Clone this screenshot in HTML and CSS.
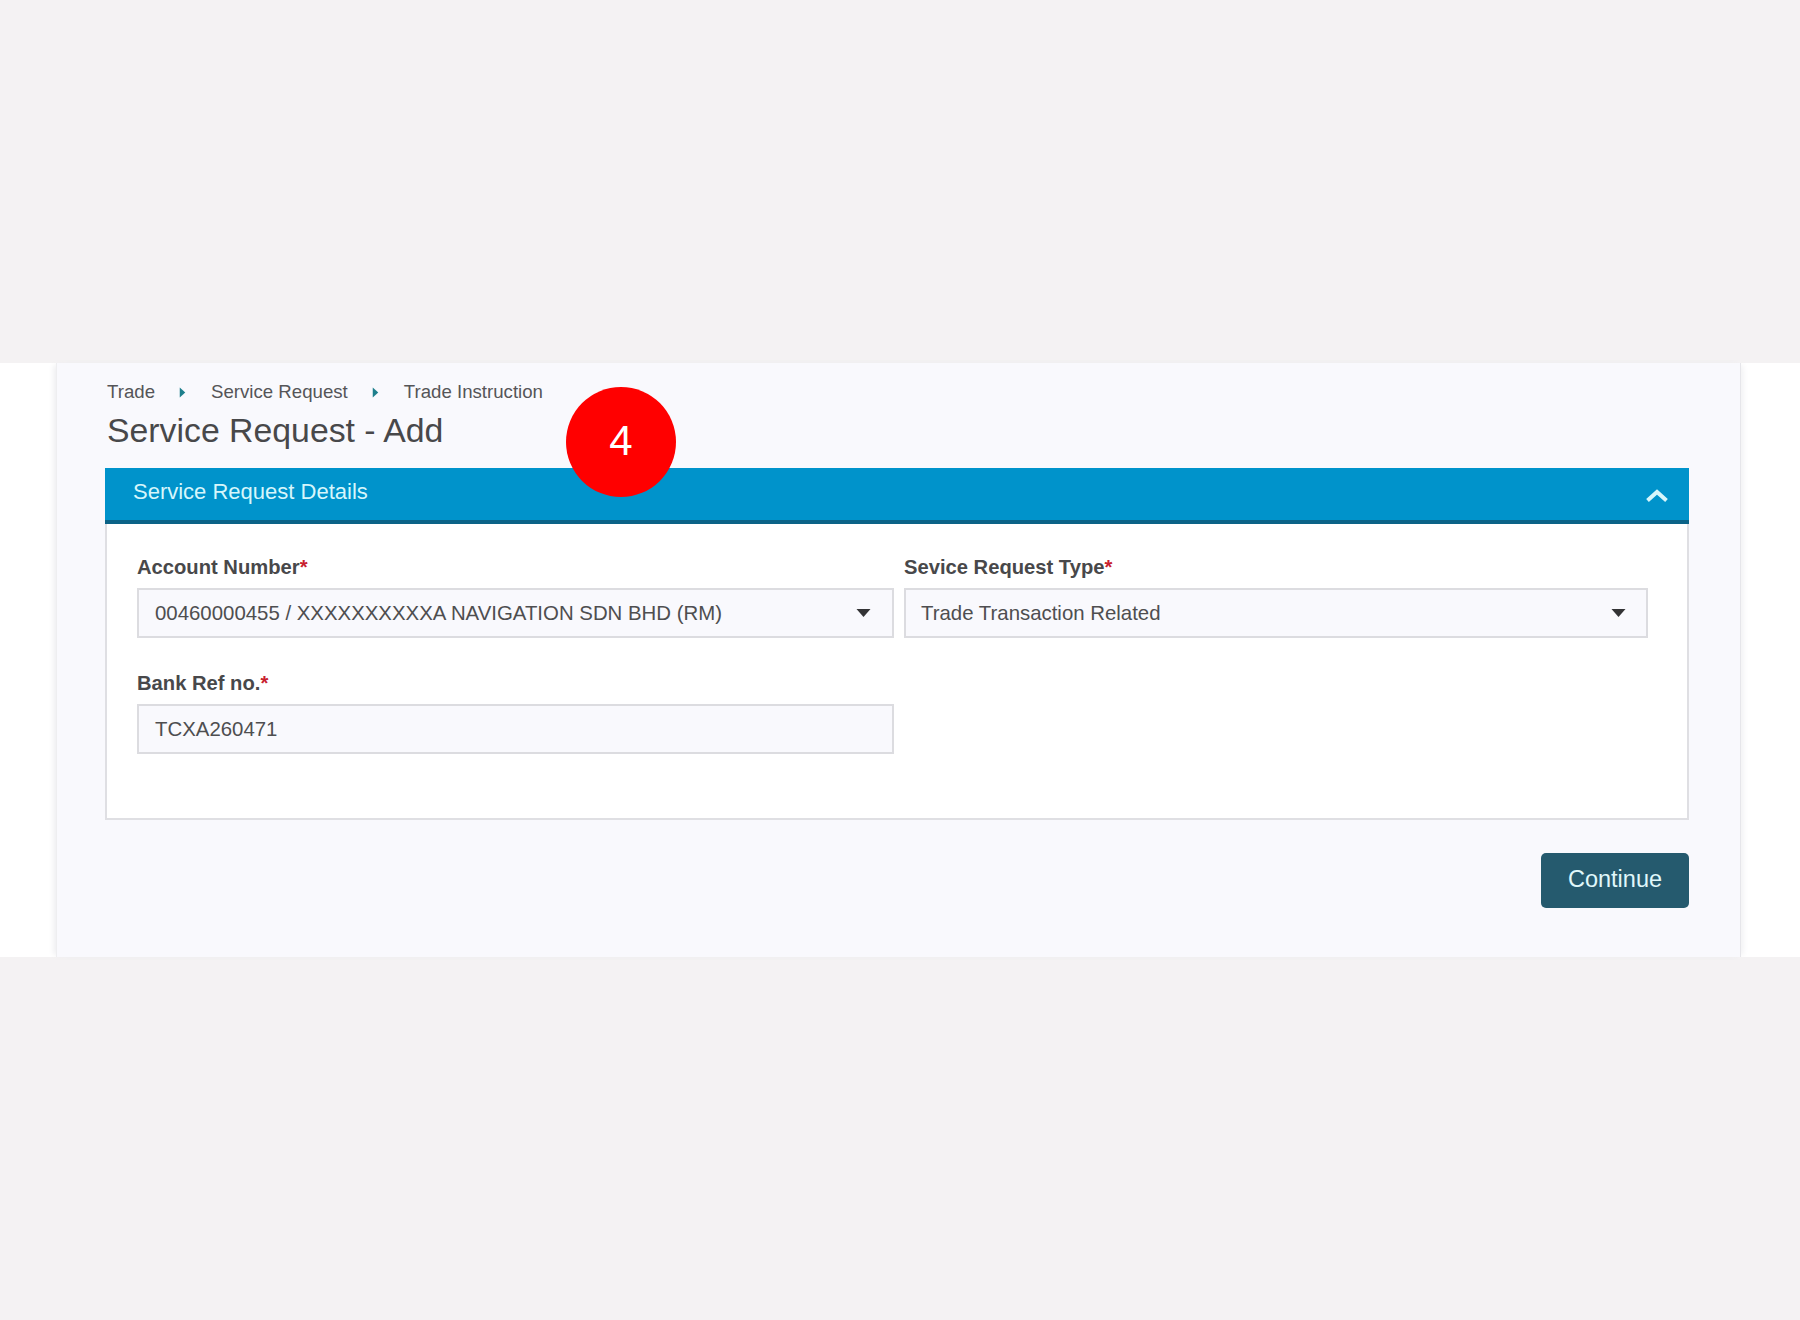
FILE: index.html
```html
<!DOCTYPE html>
<html lang="en">
<head>
<meta charset="utf-8">
<title>Service Request - Add</title>
<link rel="stylesheet" href="styles.css">
</head>
<body>
<div class="band">
  <main class="panel">
    <nav class="crumbs">
      <span>Trade</span>
      <svg class="crumb-arrow" viewBox="0 0 6 10" aria-hidden="true"><path d="M0.5 0.5 L5.5 5 L0.5 9.5 Z"/></svg>
      <span>Service Request</span>
      <svg class="crumb-arrow" viewBox="0 0 6 10" aria-hidden="true"><path d="M0.5 0.5 L5.5 5 L0.5 9.5 Z"/></svg>
      <span>Trade Instruction</span>
    </nav>
    <h1 class="title">Service Request - Add</h1>
    <section class="card">
      <header class="card-head">
        <h2 class="card-title">Service Request Details</h2>
        <svg class="chevron" viewBox="0 0 24 14" aria-hidden="true"><path d="M2.5 11.5 L12 3 L21.5 11.5"/></svg>
      </header>
      <div class="card-body">
        <div class="form-row">
          <div class="field field-account">
            <label class="label">Account Number<span class="req">*</span></label>
            <div class="control">
              <span>00460000455 / XXXXXXXXXXA NAVIGATION SDN BHD (RM)</span>
              <svg class="caret" viewBox="0 0 14 8" aria-hidden="true"><path d="M0 0 H14 L7 8 Z"/></svg>
            </div>
          </div>
          <div class="field field-type">
            <label class="label">Sevice Request Type<span class="req">*</span></label>
            <div class="control control-type">
              <span>Trade Transaction Related</span>
              <svg class="caret" viewBox="0 0 14 8" aria-hidden="true"><path d="M0 0 H14 L7 8 Z"/></svg>
            </div>
          </div>
        </div>
        <div class="form-row">
          <div class="field field-account">
            <label class="label">Bank Ref no.<span class="req">*</span></label>
            <div class="control"><span>TCXA260471</span></div>
          </div>
        </div>
      </div>
    </section>
    <div class="actions"><button class="btn" type="button">Continue</button></div>
    <div class="badge">4</div>
  </main>
</div>
</body>
</html>
```
FILE: styles.css
```css
* { box-sizing: border-box; }
html, body { margin: 0; height: 100%; }
body {
  background: #f4f2f3;
  padding-top: 363px;
  font-family: "Liberation Sans", Arial, sans-serif;
  color: #4a4a4c;
}
.band {
  background: #ffffff;
  height: 594px;
  padding-left: 56px;
  padding-right: 59px;
}
.panel {
  position: relative;
  height: 100%;
  background: #f9f9fd;
  border-left: 1px solid #eeeef0;
  border-right: 1px solid #e6e6ea;
  box-shadow: -4px 0 6px -2px #ececef, 4px 0 6px -2px #f0f0f2;
  padding: 17px 51px 0 48px;
}
.crumbs {
  display: flex;
  align-items: center;
  height: 24px;
  padding-left: 2px;
  font-size: 18.65px;
  color: #555558;
}
.crumb-arrow {
  width: 7px;
  height: 11px;
  margin: 0 25px 0 24px;
  fill: #1e7f8c;
}
.title {
  margin: 5px 0 0 2px;
  height: 59px;
  font-size: 33.8px;
  line-height: 43px;
  font-weight: 400;
  color: #48484a;
}
.card-head {
  display: flex;
  align-items: center;
  justify-content: space-between;
  height: 56px;
  padding: 0 20px 5px 28px;
  background: #0093cb;
  border-bottom: 4px solid #0b6387;
}
.card-title {
  margin: 0;
  font-size: 22px;
  font-weight: 400;
  color: #d6f6fb;
}
.chevron {
  width: 24px;
  height: 14px;
  margin-top: 9px;
  fill: none;
  stroke: #d6f6fb;
  stroke-width: 4;
}
.card-body {
  height: 296px;
  background: #ffffff;
  border: 2px solid #dfdfe3;
  border-top: 0;
  padding: 29px 0 0 30px;
}
.form-row {
  display: flex;
  gap: 10px;
  margin-bottom: 31px;
}
.field-account { width: 757px; }
.field-type { width: 744px; }
.label {
  display: block;
  height: 35px;
  font-size: 20.2px;
  line-height: 29.5px;
  font-weight: 700;
  color: #48484a;
}
.req { color: #c8202e; }
.control {
  display: flex;
  align-items: center;
  justify-content: space-between;
  height: 50px;
  padding: 0 21px 0 16px;
  background: #f9f9fd;
  border: 2px solid #dcdce0;
  font-size: 20.4px;
  color: #4e4e50;
}
.control-type { padding: 0 20px 0 15px; }
.caret {
  width: 15px;
  height: 8px;
  fill: #333335;
}
.actions {
  display: flex;
  justify-content: flex-end;
  margin-top: 33px;
}
.btn {
  width: 148px;
  height: 55px;
  border: 0;
  border-radius: 5px;
  background: #255a6e;
  color: #e0f8fb;
  font-family: inherit;
  font-size: 23.5px;
  padding: 0 0 3px;
}
.badge {
  position: absolute;
  left: 509px;
  top: 24px;
  width: 110px;
  height: 110px;
  border-radius: 50%;
  background: #ff0000;
  color: #ffffff;
  font-size: 42px;
  line-height: 108px;
  text-align: center;
}
```
